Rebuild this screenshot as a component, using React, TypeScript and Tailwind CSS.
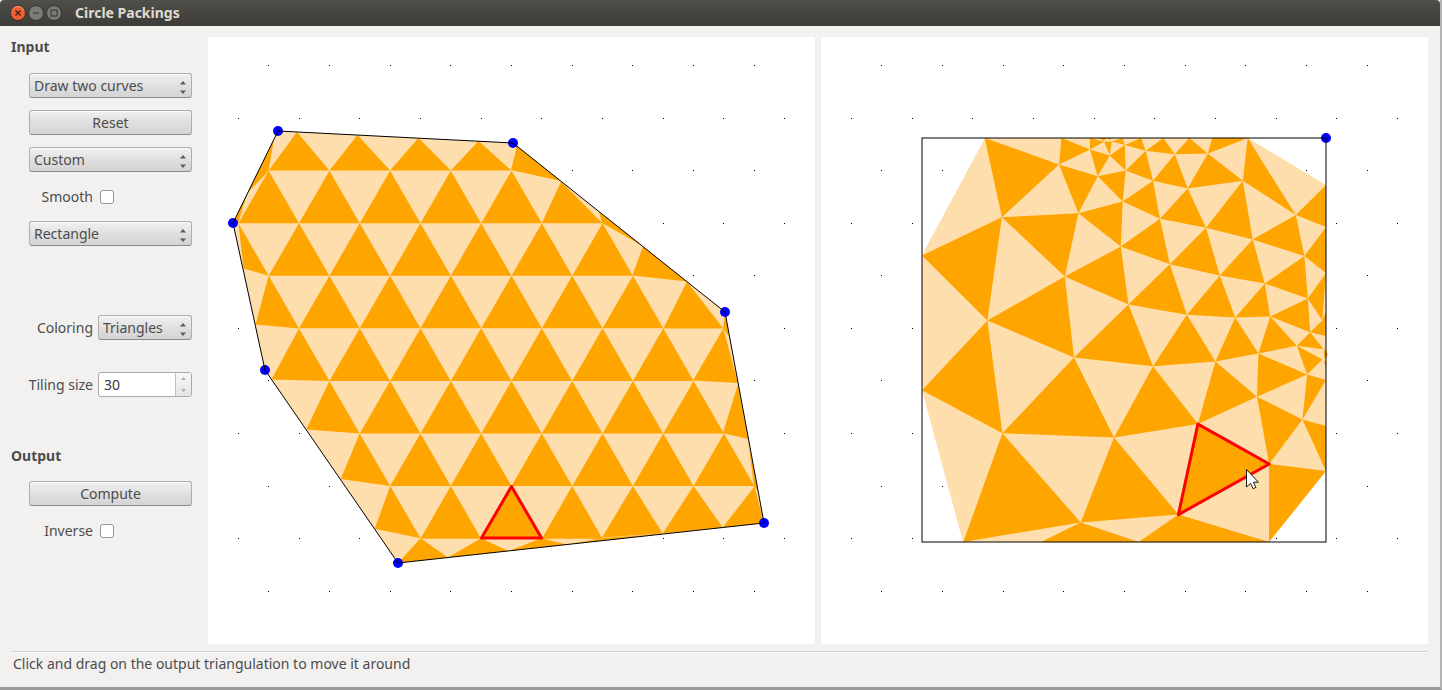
import React, { useState } from 'react';

type Point = [number, number];

const ROW_HEIGHT = 52.57;
const STEP = 60.7;
const TOP_ROW = 65.5;

const controlClass =
  'h-[25px] w-full rounded-[3px] border border-[#b0aeac] border-b-[#8c8a88] bg-linear-to-b from-[#f1f1f1] via-[#e0e0e0] to-[#d4d4d4] text-[#4c4c4c] shadow-[inset_0_1px_0_#fafafa]';

const toPoints = (points: Point[]) => points.map((p) => p.join(',')).join(' ');

const rowY = (row: number) => TOP_ROW + ROW_HEIGHT * row;

// even rows are shifted half a step to the right
const colX = (row: number, col: number) => (row % 2 === 0 ? 268.7 : 238.35) + STEP * col;

const inputCurve: Point[] = [
  [278, 131], [513, 143], [725, 312], [764, 523], [398, 563], [265, 370], [233, 223],
];

// complete triangles of the tiling: [apex row, first apex column, last apex column]
const fullRows: [number, number, number][] = [
  [2, 0, 4],
  [3, 1, 6],
  [4, 1, 6],
  [5, 2, 7],
  [6, 2, 7],
  [7, 3, 8],
  [8, 3, 5],
];

const boundaryTriangles: Point[][] = [
  [[297, 132], [268.7, 170.6], [329.4, 170.6]],
  [[357.5, 135], [329.4, 170.6], [390.1, 170.6]],
  [[418.5, 138], [390.1, 170.6], [450.8, 170.6]],
  [[478.5, 141], [450.8, 170.6], [511.5, 170.6]],
  [[517, 146], [511, 170], [561, 181]],
  [[274, 139], [268.5, 171], [247.5, 193]],
  [[247, 194], [238.5, 222], [233, 223]],
  [[561, 181.5], [541.8, 223.2], [602.5, 223.2]],
  [[599, 212], [602, 223], [643, 246]],
  [[238.4, 223.2], [243.6, 268.5], [268.7, 275.8]],
  [[643, 246.5], [632.3, 275.5], [687, 281.5]],
  [[268.7, 275.8], [255.5, 324.5], [299, 328.4]],
  [[687, 281.5], [663.3, 328.4], [723.3, 328.4]],
  [[725, 312], [723.3, 328.4], [729, 337]],
  [[299, 328.4], [271.5, 379.5], [329.5, 380.9]],
  [[723.3, 328.4], [693, 380.5], [738, 383]],
  [[329.4, 380.9], [306.3, 429.5], [359.7, 433.5]],
  [[738, 384], [723, 433], [748, 439]],
  [[359.7, 433.5], [340.7, 479], [390.2, 486.1]],
  [[748, 440], [754, 486], [758, 491]],
  [[390.2, 486.1], [374.7, 528.7], [420.5, 538.3]],
  [[632.9, 486.1], [602, 537.5], [662.7, 533.5]],
  [[693.5, 486.1], [662.7, 533.5], [722.7, 527.5]],
  [[754.5, 486.5], [722.7, 527.5], [764, 523]],
  [[420.5, 538.3], [398, 563], [448, 557.5]],
  [[481, 538.3], [448, 557.5], [508.5, 551]],
  [[541.5, 538.3], [508.5, 551], [567, 544.5]],
  [[602, 538], [567, 544.5], [662, 534]],
];

const inputTriangles: Point[][] = [
  ...boundaryTriangles,
  ...fullRows.flatMap(([row, first, last]) =>
    Array.from({ length: last - first + 1 }, (_, i): Point[] => {
      const x = colX(row, first + i);
      return [[x, rowY(row)], [x - STEP / 2, rowY(row + 1)], [x + STEP / 2, rowY(row + 1)]];
    }),
  ),
];

const outputHull: Point[] = [
  [985, 138], [1248, 138], [1326, 185], [1326, 471], [1269, 542], [963, 542], [922, 390], [922, 255],
];

// vertices of the packed triangulation
const v: Record<string, Point> = {
  t1: [984.7, 138], t2: [1061.5, 138], t3: [1090, 138], t4: [1122.7, 138], t5: [1141, 138],
  t6: [1163.3, 138], t7: [1189.3, 138], t8: [1212.3, 138], t9: [1247.7, 138],
  r1: [1326, 185], r2: [1326, 227], r3: [1326, 273], r4: [1326, 311], r5: [1326, 336],
  r6: [1326, 380], r7: [1326, 426], r8: [1326, 471],
  l1: [922, 255.5], l2: [922, 390.3],
  b1: [963.3, 542], b2: [1041, 542], b3: [1138.7, 542], b4: [1269, 542],
  a: [1104.3, 141.8], b: [1111.6, 141.4],
  c: [1001.9, 217.3], d: [987.4, 320.4], e: [1059, 164.4], g: [1090, 149.6], h: [1097.7, 176.2],
  i: [1078.4, 213.3], j: [1064.8, 276.4], k: [1122.7, 201.4], l: [1120.8, 246.5], m: [1128.4, 304.4],
  n: [1109.8, 155.5], o: [1125.7, 170.4], p: [1153, 180.7], q: [1145.7, 150.8], r: [1124.8, 145.1],
  s: [1174.8, 154.3], t: [1187.7, 188.4], u: [1160, 218.7], w: [1169.8, 264.3], x: [1207.8, 153.6],
  y: [1242.8, 180.7], z: [1206, 227.7],
  aa: [1252.7, 239.4], ab: [1295.8, 215], ac: [1304.4, 256.1], ad: [1219.8, 275.5], ae: [1264.8, 283.5],
  af: [1307.8, 298.6], ag: [1322.3, 320.3], ah: [1310.2, 332.2], ai: [1270.2, 316.5], aj: [1235.2, 317.4],
  ak: [1186.9, 314.7], al: [1296.8, 345.7], am: [1323.5, 349.2], an: [1322.4, 359.6], ao: [1307.2, 374.6],
  ap: [1258.4, 353.5], aq: [1215.4, 361.5], ar: [1257, 396.7], as: [1302.4, 419.6], at: [1197.9, 424.1],
  au: [1153, 366.2], av: [1074, 357.6], aw: [1002.4, 433.3], ax: [1114, 437.6], ay: [1080.7, 522.4],
  az: [1178.4, 514.6], ba: [1269.2, 464],
};

const outputTriangles = [
  't1 e c', 'l1 c d', 'e t2 g', 'e h i', 'c i j', 'i k l', 'j l m', 'd j av', 'l2 d aw', 'aw av ax',
  'aw b1 ay', 'ax ay az', 'ay b2 b3', 'az b3 b4', 'ba b4 r8', 'av m au', 'ax au at', 'au ak aq',
  'm w ak', 'l u w', 'k p u', 'h o k', 'g n h', 'g t3 a', 'a b n', 'b t4 r', 'n r o', 'o q p',
  'r t5 q', 'q t6 s', 's t7 x', 'p s t', 'u t z', 't x y', 'x t8 t9', 't9 y ab', 'ab r1 r2', 'z y aa',
  'aa ab ac', 'ac r2 r3', 'w z ad', 'ad aa ae', 'ae ac af', 'af r3 ag', 'ag r4 r5', 'ah ag r5',
  'ak ad aj', 'aj ae ai', 'ai af ah', 'al ah am', 'al an ao', 'ap ai al', 'aq aj ap', 'at aq ar',
  'ap ao ar', 'ao r6 as', 'as r7 r8', 'ar as ba', 'at ba az',
].map((names) => names.split(' ').map((name) => v[name]));

const GridDots = ({ offset = 0 }: { offset?: number }) => (
  <g fill="#000" shapeRendering="crispEdges">
    {Array.from({ length: 11 }, (_, row) =>
      Array.from({ length: row % 2 === 0 ? 9 : 10 }, (_, col) => (
        <rect
          key={`${row}-${col}`}
          x={Math.floor(colX(row, col)) + offset}
          y={Math.floor(rowY(row))}
          width="1"
          height="1"
        />
      )),
    )}
  </g>
);

const Triangles = ({ items }: { items: Point[][] }) => (
  <g fill="#ffa500">
    {items.map((points, index) => (
      <polygon key={index} points={toPoints(points)} />
    ))}
  </g>
);

const InputCanvas = () => (
  <svg viewBox="208 37 607 607" className="block w-full bg-white" role="img" aria-label="Input triangulation">
    <GridDots />
    <polygon points={toPoints(inputCurve)} fill="#ffdead" />
    <Triangles items={inputTriangles} />
    {inputCurve.map(([x, y]) => (
      <circle key={x} cx={x} cy={y} r="5" fill="#00f" />
    ))}
    <polygon points={toPoints(inputCurve)} fill="none" stroke="#000" />
    <polygon
      points="511.5,486.5 481.5,538 541.5,538"
      fill="none"
      stroke="#f00"
      strokeWidth="3"
      strokeLinejoin="round"
    />
  </svg>
);

const OutputCanvas = () => (
  <svg viewBox="821 37 607 607" className="block w-full bg-white" role="img" aria-label="Output triangulation">
    <GridDots offset={613} />
    <polygon points={toPoints(outputHull)} fill="#ffdead" />
    <Triangles items={outputTriangles} />
    <path d="M1099 138h7l-2 3zM1107 138h4v2zM1324 349l2 2v6l-2 1zM1324 360l2 2v8z" fill="#ffa500" />
    <path d="M1326 351l2 3-2 5z" fill="#ffc266" />
    <circle cx="1326" cy="138" r="5" fill="#00f" />
    <rect x="922" y="138" width="404" height="404" fill="none" stroke="#000" />
    <polygon
      points={toPoints([v.at, v.ba, v.az])}
      fill="none"
      stroke="#f00"
      strokeWidth="3"
      strokeLinejoin="round"
    />
    <path
      d="M1246.5 469.5v17.5l4-3.7 2.6 5.4 2.8-1.3-2.5-5.2h5z"
      fill="#fff"
      stroke="#1a1a1a"
      strokeLinejoin="round"
    />
  </svg>
);

const Arrows = ({ className = '' }: { className?: string }) => (
  <svg viewBox="0 0 6 13" className={`h-[13px] w-[6px] ${className}`} aria-hidden="true">
    <path d="M0 3.5L3 0l3 3.5zM0 9.5h6L3 13z" fill="currentColor" />
  </svg>
);

interface SelectBoxProps {
  id: string;
  label?: string;
  options: string[];
}

const SelectBox: React.FC<SelectBoxProps> = ({ id, label, options }) => (
  <div className="relative w-full">
    <select id={id} aria-label={label} className={`${controlClass} appearance-none pl-1 pr-5`}>
      {options.map((option) => (
        <option key={option}>{option}</option>
      ))}
    </select>
    <Arrows className="pointer-events-none absolute right-[6px] top-[8px] text-[#5a5a5a]" />
  </div>
);

const CheckRow = ({ id, label }: { id: string; label: string }) => (
  <div className="flex h-[25px] items-center">
    <label htmlFor={id} className="w-[64px] text-right">
      {label}
    </label>
    <input
      id={id}
      type="checkbox"
      className="ml-[7px] h-[14px] w-[14px] appearance-none rounded-[3px] border border-[#9a9896] bg-white checked:bg-[#f07746]"
    />
  </div>
);

const App: React.FC = () => {
  const [tilingSize, setTilingSize] = useState(30);

  return (
    <div className="border-b-[3px] border-r-2 border-b-[#9b9997] border-r-[#b5b3b1] bg-[#f2f1f0] font-['Noto_Sans','Open_Sans',sans-serif] text-[14px] leading-[20px] text-[#4c4c4c]">
      <header className="flex h-[26px] items-center rounded-t-[4px] bg-linear-to-b from-[#504f49] to-[#3c3b37] pl-[10px]">
        <div className="flex gap-[2px]">
          <button type="button" aria-label="Close">
            <svg viewBox="0 0 16 16" className="block h-4 w-4">
              <circle cx="8" cy="8" r="7.5" fill="#ef5f33" stroke="#34332f" />
              <path d="M2 5.5a6.5 6.5 0 0 1 12 0" fill="none" stroke="#f79a78" />
              <path d="M5.5 5.5l5 5m0-5l-5 5" stroke="#3b2017" strokeWidth="1.3" />
            </svg>
          </button>
          <button type="button" aria-label="Minimize">
            <svg viewBox="0 0 16 16" className="block h-4 w-4">
              <circle cx="8" cy="8" r="7.5" fill="#7b7a74" stroke="#34332f" />
              <path d="M5 8h6" stroke="#34332f" />
            </svg>
          </button>
          <button type="button" aria-label="Maximize">
            <svg viewBox="0 0 16 16" className="block h-4 w-4">
              <circle cx="8" cy="8" r="7.5" fill="#7b7a74" stroke="#34332f" />
              <rect x="5" y="5" width="6" height="6" fill="none" stroke="#34332f" />
            </svg>
          </button>
        </div>
        <h1 className="ml-[13px] text-[14px] font-bold text-[#dfdbd2]">Circle Packings</h1>
      </header>

      <div className="flex pr-[12px] pt-[11px]">
        <aside className="w-[208px] shrink-0 pl-[11px] pr-[16px]">
          <h2 className="font-bold">Input</h2>
          <div className="flex flex-col gap-[12px] pl-[18px] pt-[16px]">
            <SelectBox id="mode" label="Drawing mode" options={['Draw two curves', 'Draw one curve']} />
            <button type="button" className={controlClass}>
              Reset
            </button>
            <SelectBox id="shape" label="Input shape" options={['Custom', 'Rectangle']} />
            <CheckRow id="smooth" label="Smooth" />
            <SelectBox id="target" label="Output shape" options={['Rectangle', 'Custom']} />
          </div>

          <div className="mt-[69px] flex flex-col gap-[32px]">
            <div className="flex items-center gap-[5px]">
              <label htmlFor="coloring" className="w-[82px] shrink-0 text-right">
                Coloring
              </label>
              <SelectBox id="coloring" options={['Triangles', 'Circles']} />
            </div>
            <div className="flex items-center gap-[5px]">
              <label htmlFor="tiling" className="w-[82px] shrink-0 text-right">
                Tiling size
              </label>
              <div className="flex h-[25px] min-w-0 flex-1 overflow-hidden rounded-[3px] border border-[#b0a8a2] bg-white">
                <input
                  id="tiling"
                  type="number"
                  value={tilingSize}
                  onChange={(e) => setTilingSize(Number(e.target.value))}
                  className="w-full min-w-0 flex-1 appearance-none pl-[5px] text-[#3c3c3c] outline-none [-moz-appearance:textfield] [&::-webkit-inner-spin-button]:appearance-none"
                />
                <div className="flex w-4 shrink-0 flex-col border-l border-[#c4c0bd] bg-linear-to-b from-[#f8f8f8] to-[#e4e4e4] text-[#b0aeac]">
                  <button
                    type="button"
                    aria-label="Increase tiling size"
                    onClick={() => setTilingSize(tilingSize + 1)}
                    className="flex flex-1 items-center justify-center"
                  >
                    <svg viewBox="0 0 5 3" className="h-[3px] w-[5px]">
                      <path d="M0 3L2.5 0 5 3z" fill="currentColor" />
                    </svg>
                  </button>
                  <button
                    type="button"
                    aria-label="Decrease tiling size"
                    onClick={() => setTilingSize(tilingSize - 1)}
                    className="flex flex-1 items-center justify-center"
                  >
                    <svg viewBox="0 0 5 3" className="h-[3px] w-[5px]">
                      <path d="M0 0h5L2.5 3z" fill="currentColor" />
                    </svg>
                  </button>
                </div>
              </div>
            </div>
          </div>

          <h2 className="mt-[49px] font-bold">Output</h2>
          <div className="flex flex-col gap-[12px] pl-[18px] pt-[15px]">
            <button type="button" className={controlClass}>
              Compute
            </button>
            <CheckRow id="inverse" label="Inverse" />
          </div>
        </aside>

        <main className="grid min-w-0 flex-1 grid-cols-2 gap-[6px]">
          <InputCanvas />
          <OutputCanvas />
        </main>
      </div>

      <footer className="ml-[11px] mr-[12px] mt-[7px] h-[36px] border-t border-[#d5d3d1] pl-[2px] pt-[2px] shadow-[inset_0_1px_0_#fcfcfc]">
        Click and drag on the output triangulation to move it around
      </footer>
    </div>
  );
};

export default App;
